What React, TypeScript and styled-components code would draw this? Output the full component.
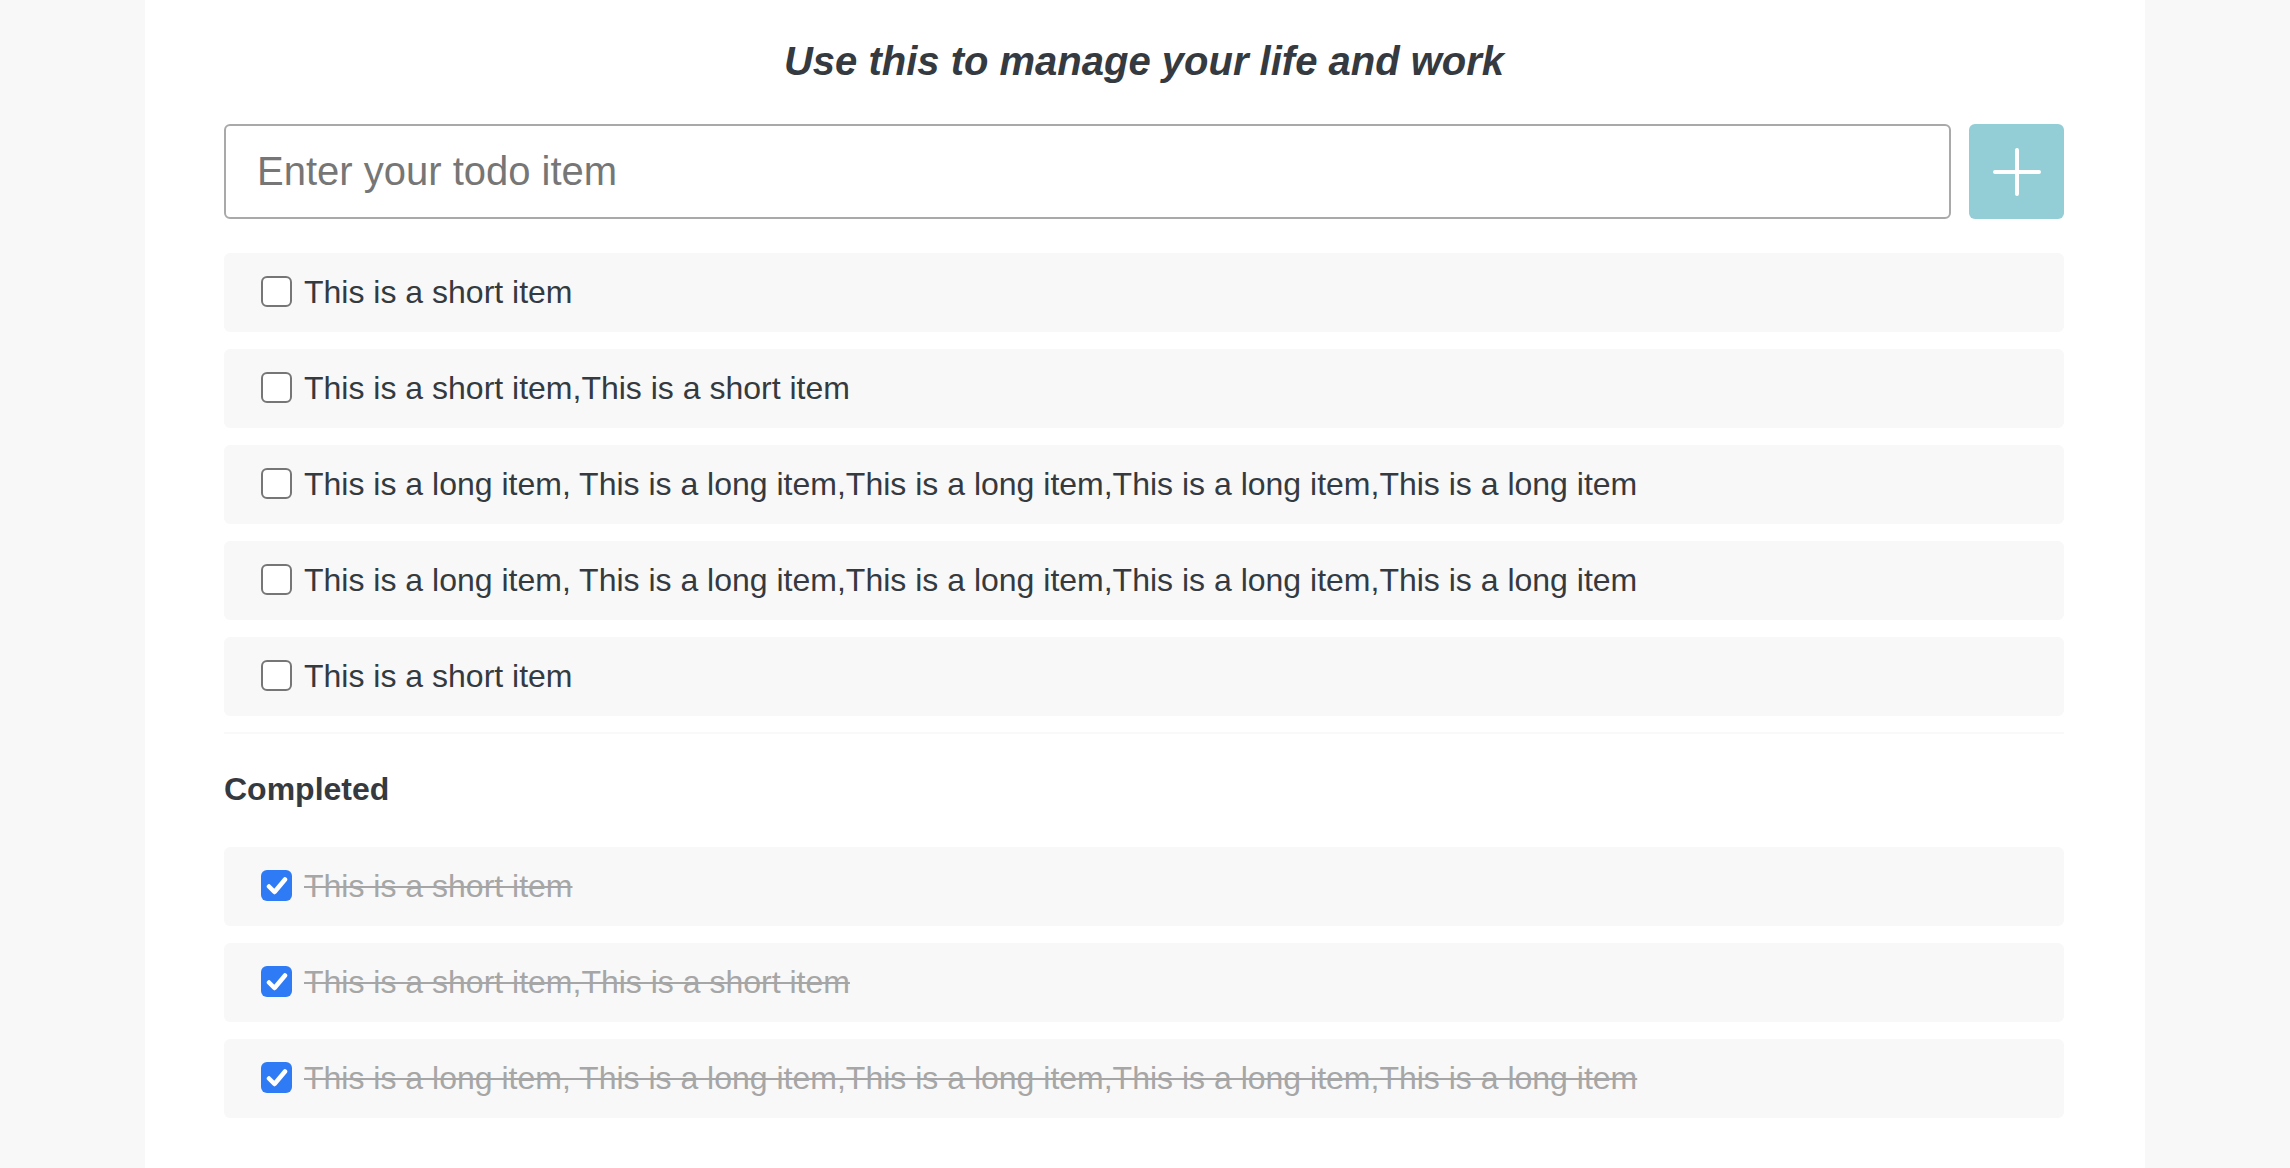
import React from "react";
import styled, { createGlobalStyle } from "styled-components";

const GlobalStyle = createGlobalStyle`
  html, body {
    margin: 0;
    padding: 0;
    background: #f8f8f8;
    font-family: "Liberation Sans", Arial, Helvetica, sans-serif;
  }
  * { box-sizing: border-box; }
`;

const Page = styled.div`
  width: 2000px;
  min-height: 1168px;
  margin: 0 auto;
  background: #ffffff;
  padding: 37px 81px 40px 79px;
`;

const Title = styled.h1`
  margin: 0;
  font-size: 40px;
  line-height: 48px;
  font-weight: 700;
  font-style: italic;
  color: #343a40;
  text-align: center;
`;

const Form = styled.form`
  display: flex;
  gap: 18px;
  margin-top: 39px;
  height: 95px;
`;

const Input = styled.input`
  flex: 1;
  height: 95px;
  border: 2px solid #a9a9a9;
  border-radius: 6px;
  padding: 0 31px;
  font-family: "Liberation Sans", Arial, sans-serif;
  font-size: 40px;
  color: #343a40;
  outline: none;
  &::placeholder {
    color: #767676;
  }
`;

const AddButton = styled.button`
  width: 95px;
  height: 95px;
  flex: none;
  border: none;
  border-radius: 6px;
  background: #93cdd6;
  display: flex;
  align-items: center;
  justify-content: center;
  padding: 0;
  cursor: pointer;
`;

const List = styled.ul<{ $top: number }>`
  list-style: none;
  margin: ${(p) => p.$top}px 0 0;
  padding: 0;
  display: flex;
  flex-direction: column;
  gap: 17px;
`;

const Item = styled.li`
  height: 79px;
  background: #f8f8f8;
  border-radius: 6px;
  display: flex;
  align-items: center;
  padding: 0 0 2px 37px;
  gap: 12px;
`;

const Box = styled.span<{ $checked: boolean }>`
  width: 31px;
  height: 31px;
  flex: none;
  border-radius: 6px;
  border: ${(p) => (p.$checked ? "none" : "2.5px solid #767676")};
  background: ${(p) => (p.$checked ? "#2f7bf5" : "#ffffff")};
  display: flex;
  align-items: center;
  justify-content: center;
`;

const Label = styled.span<{ $done: boolean }>`
  font-size: 32px;
  line-height: 38px;
  color: ${(p) => (p.$done ? "#a6a6a6" : "#343a40")};
  text-decoration: ${(p) => (p.$done ? "line-through" : "none")};
  text-decoration-thickness: 2px;
  white-space: nowrap;
`;

const Divider = styled.div`
  height: 2px;
  margin-top: 16px;
  background: #f9f9f9;
`;

const Heading = styled.h2`
  margin: 36px 0 0;
  font-size: 32px;
  line-height: 38px;
  font-weight: 700;
  color: #343a40;
`;

const short = "This is a short item";
const shortTwice = "This is a short item,This is a short item";
const long =
  "This is a long item, This is a long item,This is a long item,This is a long item,This is a long item";

const todos = [short, shortTwice, long, long, short];
const done = [short, shortTwice, long];

const Check = () => (
  <svg width="22" height="20" viewBox="0 0 22 20" fill="none">
    <path
      d="M3 10.5 L8.5 16 L19 3.5"
      stroke="#ffffff"
      strokeWidth="4.5"
      strokeLinecap="round"
      strokeLinejoin="round"
    />
  </svg>
);

const Plus = () => (
  <svg width="48" height="48" viewBox="0 0 48 48" fill="none">
    <path d="M24 2 V46 M2 24 H46" stroke="#ffffff" strokeWidth="4" strokeLinecap="round" />
  </svg>
);

const Row = ({ text, checked }: { text: string; checked: boolean }) => (
  <Item>
    <Box $checked={checked}>{checked && <Check />}</Box>
    <Label $done={checked}>{text}</Label>
  </Item>
);

export default function App() {
  return (
    <>
      <GlobalStyle />
      <Page>
        <Title>Use this to manage your life and work</Title>
        <Form onSubmit={(e) => e.preventDefault()}>
          <Input placeholder="Enter your todo item" />
          <AddButton type="submit" aria-label="Add">
            <Plus />
          </AddButton>
        </Form>
        <List $top={34}>
          {todos.map((t, i) => (
            <Row key={i} text={t} checked={false} />
          ))}
        </List>
        <Divider />
        <Heading>Completed</Heading>
        <List $top={39}>
          {done.map((t, i) => (
            <Row key={i} text={t} checked={true} />
          ))}
        </List>
      </Page>
    </>
  );
}
